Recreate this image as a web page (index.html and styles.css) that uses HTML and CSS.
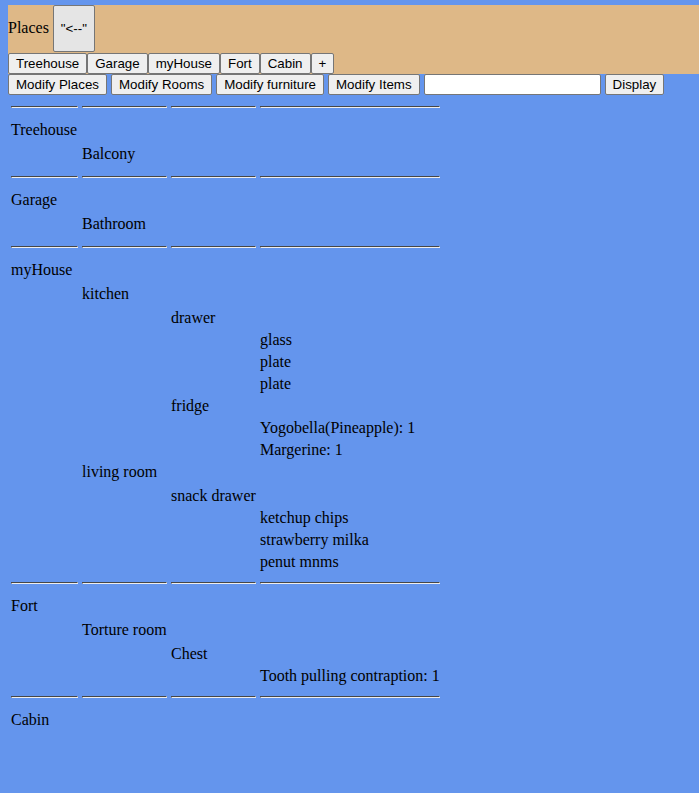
FILE: index.html
```html
<!DOCTYPE html>
<html>
<head>
<meta charset="utf-8">
<link rel="stylesheet" href="styles.css">
</head>
<body>
<div class="header">
  <div class="title-line">Places <button class="btn back">"&lt;--"</button></div>
  <div class="tabs"><button class="btn">Treehouse</button><button class="btn">Garage</button><button class="btn">myHouse</button><button class="btn">Fort</button><button class="btn">Cabin</button><button class="btn">+</button></div>
</div>
<div class="controls">
  <button class="btn">Modify Places</button> <button class="btn">Modify Rooms</button> <button class="btn">Modify furniture</button> <button class="btn">Modify Items</button> <input class="field" type="text"> <button class="btn">Display</button>
</div>
<table class="tree">
  <tr><td class="k1"><hr></td><td class="k2"><hr></td><td class="k3"><hr></td><td class="k4"><hr></td></tr>
  <tr><td><div class="c">Treehouse</div></td><td></td><td></td><td></td></tr>
  <tr><td></td><td><div class="c">Balcony</div></td><td></td><td></td></tr>
  <tr><td><hr></td><td><hr></td><td><hr></td><td><hr></td></tr>
  <tr><td><div class="c">Garage</div></td><td></td><td></td><td></td></tr>
  <tr><td></td><td><div class="c">Bathroom</div></td><td></td><td></td></tr>
  <tr><td><hr></td><td><hr></td><td><hr></td><td><hr></td></tr>
  <tr><td><div class="c">myHouse</div></td><td></td><td></td><td></td></tr>
  <tr><td></td><td><div class="c">kitchen</div></td><td></td><td></td></tr>
  <tr><td></td><td></td><td><div class="i">drawer</div></td><td></td></tr>
  <tr><td></td><td></td><td></td><td><div class="i">glass</div></td></tr>
  <tr><td></td><td></td><td></td><td><div class="i">plate</div></td></tr>
  <tr><td></td><td></td><td></td><td><div class="i">plate</div></td></tr>
  <tr><td></td><td></td><td><div class="i">fridge</div></td><td></td></tr>
  <tr><td></td><td></td><td></td><td><div class="i">Yogobella(Pineapple): 1</div></td></tr>
  <tr><td></td><td></td><td></td><td><div class="i">Margerine: 1</div></td></tr>
  <tr><td></td><td><div class="c">living room</div></td><td></td><td></td></tr>
  <tr><td></td><td></td><td><div class="i">snack drawer</div></td><td></td></tr>
  <tr><td></td><td></td><td></td><td><div class="i">ketchup chips</div></td></tr>
  <tr><td></td><td></td><td></td><td><div class="i">strawberry milka</div></td></tr>
  <tr><td></td><td></td><td></td><td><div class="i">penut mnms</div></td></tr>
  <tr><td><hr></td><td><hr></td><td><hr></td><td><hr></td></tr>
  <tr><td><div class="c">Fort</div></td><td></td><td></td><td></td></tr>
  <tr><td></td><td><div class="c">Torture room</div></td><td></td><td></td></tr>
  <tr><td></td><td></td><td><div class="i">Chest</div></td><td></td></tr>
  <tr><td></td><td></td><td></td><td><div class="i">Tooth pulling contraption: 1</div></td></tr>
  <tr><td><hr></td><td><hr></td><td><hr></td><td><hr></td></tr>
  <tr><td><div class="c">Cabin</div></td><td></td><td></td><td></td></tr>
</table>
</body>
</html>
```

FILE: styles.css
```css
html, body {
  background: #6495ed;
}
body {
  margin: 5px 0 8px 8px;
  font-family: "Liberation Serif", "Times New Roman", serif;
  font-size: 16px;
  color: #000;
}
.header {
  background: #deb887;
}
.title-line,
.tabs,
.controls {
  line-height: normal;
}
.tabs {
  padding-top: 1px;
}
.btn {
  font-family: "Liberation Sans", Arial, sans-serif;
  font-size: 13.3333px;
  color: #000;
  background: #efefef;
  border: 1px solid #767676;
  border-radius: 2px;
  padding: 0 7px;
  margin: 0;
  height: 21px;
  box-sizing: border-box;
  line-height: normal;
  vertical-align: baseline;
}
.back {
  width: 42px;
  height: 47px;
  background: #e5e5e5;
  padding: 0;
}
.field {
  font-family: "Liberation Sans", Arial, sans-serif;
  font-size: 13.3333px;
  width: 177px;
  height: 21px;
  box-sizing: border-box;
  border: 1px solid #767676;
  border-radius: 2px;
  background: #fff;
  padding: 1px 2px;
  margin: 0;
  vertical-align: baseline;
}
.tree {
  border-spacing: 2px;
  border-collapse: separate;
}
.tree td {
  padding: 1px;
  vertical-align: top;
}
.tree td.k1 { width: 67px; }
.tree td.k2 { width: 85px; }
.tree td.k3 { width: 85px; }
.tree td.k4 { width: 180px; }
.tree hr {
  margin: 8px 0;
  border: 1px inset #bbb;
  border-color: #9a9a9a #eee #eee #9a9a9a;
  height: 0;
}
.c {
  height: 19px;
  padding-top: 1px;
  white-space: nowrap;
}
.i {
  height: 17px;
  padding-top: 1px;
  white-space: nowrap;
}
```
